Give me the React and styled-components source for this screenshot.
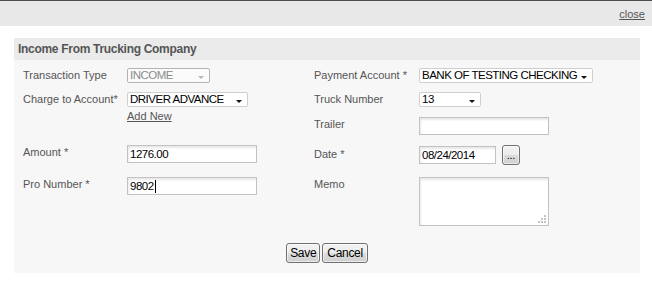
import React from "react"
import styled, { createGlobalStyle, css } from "styled-components"

const GlobalStyle = createGlobalStyle`
  html, body {
    margin: 0;
    padding: 0;
    background: #ffffff;
  }
  body {
    font-family: "Liberation Sans", Arial, sans-serif;
    font-size: 11px;
    color: #555555;
  }
`

const Window = styled.div`
  width: 652px;
  height: 282px;
  border-top: 1px solid #4d4d4d;
  box-sizing: border-box;
`

const TopBar = styled.div`
  height: 25px;
  background: #e8e8e8;
  display: flex;
  justify-content: flex-end;
  align-items: flex-start;
  padding: 7px 7px 0 0;
  box-sizing: border-box;
`

const CloseLink = styled.a`
  color: #555555;
  font-size: 11px;
  line-height: 13px;
  text-decoration: underline;
`

const Panel = styled.div`
  margin: 12px 12px 0 14px;
  width: 626px;
`

const PanelTitle = styled.div`
  height: 22px;
  line-height: 22px;
  background: #ebebeb;
  padding-left: 4px;
  font-weight: bold;
  font-size: 12px;
  letter-spacing: -0.3px;
  color: #555555;
`

const PanelBody = styled.div`
  background: #f7f7f7;
  height: 213px;
  padding: 8px 0 0 9px;
  box-sizing: border-box;
`

const FormGrid = styled.div`
  display: grid;
  grid-template-columns: 104px 187px 105px 1fr;
  grid-template-rows: 24px 25px 28px 32px 49px;
  align-items: start;
`

const Label = styled.div`
  padding-top: ${(p) => p.$top ?? 1}px;
  font-size: 11px;
  line-height: 13px;
  color: #555555;
  white-space: nowrap;
`

const Cell = styled.div`
  display: flex;
  flex-direction: ${(p) => (p.$stack ? "column" : "row")};
  align-items: ${(p) => (p.$stack ? "flex-start" : "center")};
  gap: ${(p) => p.$gap ?? 0}px;
`

const valueText = css`
  font-family: "Liberation Sans", Arial, sans-serif;
  font-size: 11.5px;
  letter-spacing: -0.5px;
  color: #000000;
  white-space: nowrap;
`

const Select = styled.div`
  ${valueText};
  position: relative;
  width: ${(p) => p.$w}px;
  height: 15px;
  line-height: 13px;
  box-sizing: border-box;
  border: 1px solid ${(p) => (p.$disabled ? "#b4b4b4" : "#cfcfcf")};
  border-radius: 2px;
  background: ${(p) => (p.$disabled ? "#fbfbfb" : "#ffffff")};
  color: ${(p) => (p.$disabled ? "#8a8a8a" : "#000000")};
  padding-left: 2px;

  &::after {
    content: "";
    position: absolute;
    right: 5px;
    bottom: 3px;
    width: 0;
    height: 0;
    border-left: 3.5px solid transparent;
    border-right: 3.5px solid transparent;
    border-top: 3px solid ${(p) => (p.$disabled ? "#b8b8b8" : "#111111")};
  }
`

const Input = styled.div`
  ${valueText};
  position: relative;
  display: flex;
  align-items: center;
  width: ${(p) => p.$w}px;
  height: ${(p) => p.$h ?? 18}px;
  box-sizing: border-box;
  border: 1px solid #c2c2c2;
  background: #ffffff;
  box-shadow: inset 1px 2px 2px rgba(0, 0, 0, 0.09);
  padding-left: 2px;
`

const Memo = styled(Input)`
  align-items: flex-start;
`

const Caret = styled.span`
  display: inline-block;
  width: 1px;
  height: 13px;
  margin-left: 1px;
  background: #000000;
`

const Grip = styled.svg`
  position: absolute;
  right: 2px;
  bottom: 2px;
`

const AddNew = styled.a`
  margin-top: 3px;
  font-size: 11px;
  line-height: 13px;
  color: #555555;
  text-decoration: underline;
`

const Button = styled.button`
  font-family: "Liberation Sans", Arial, sans-serif;
  font-size: 12px;
  letter-spacing: -0.3px;
  color: #000000;
  height: 20px;
  padding: 0 ${(p) => p.$pad ?? 3}px;
  border: 1px solid #707070;
  border-radius: 3px;
  background: linear-gradient(#f3f3f3, #ebebeb 50%, #dddddd 51%, #cfcfcf);
  box-shadow: inset 0 0 0 1px rgba(255, 255, 255, 0.6);
  line-height: 16px;
`

const DotsButton = styled(Button)`
  width: 18px;
  padding: 0;
  font-size: 11px;
  line-height: 12px;
`

const Actions = styled.div`
  display: flex;
  justify-content: center;
  gap: 2px;
  margin: 17px 0 0 -9px;
`

const ResizeGrip = () => (
  <Grip width="9" height="9" viewBox="0 0 9 9">
    {[
      [7, 1],
      [4, 4],
      [7, 4],
      [1, 7],
      [4, 7],
      [7, 7],
    ].map(([x, y]) => (
      <rect key={`${x}-${y}`} x={x} y={y} width="2" height="2" fill="#c4c4c4" />
    ))}
  </Grip>
)

export default function App() {
  return (
    <>
      <GlobalStyle />
      <Window>
        <TopBar>
          <CloseLink href="#">close</CloseLink>
        </TopBar>
        <Panel>
          <PanelTitle>Income From Trucking Company</PanelTitle>
          <PanelBody>
            <FormGrid>
              <Label>Transaction Type</Label>
              <Cell>
                <Select $w={83} $disabled>
                  INCOME
                </Select>
              </Cell>
              <Label>Payment Account *</Label>
              <Cell>
                <Select $w={174}>BANK OF TESTING CHECKING</Select>
              </Cell>

              <Label>Charge to Account*</Label>
              <Cell $stack>
                <Select $w={121}>DRIVER ADVANCE</Select>
                <AddNew href="#">Add New</AddNew>
              </Cell>
              <Label>Truck Number</Label>
              <Cell>
                <Select $w={62}>13</Select>
              </Cell>

              <div />
              <div />
              <Label>Trailer</Label>
              <Cell>
                <Input $w={130} />
              </Cell>

              <Label>Amount *</Label>
              <Cell>
                <Input $w={130}>1276.00</Input>
              </Cell>
              <Label $top={3}>Date *</Label>
              <Cell $gap={6}>
                <Input $w={77}>08/24/2014</Input>
                <DotsButton>...</DotsButton>
              </Cell>

              <Label>Pro Number *</Label>
              <Cell>
                <Input $w={130}>
                  9802
                  <Caret />
                </Input>
              </Cell>
              <Label>Memo</Label>
              <Cell>
                <Memo $w={130} $h={49}>
                  <ResizeGrip />
                </Memo>
              </Cell>
            </FormGrid>
            <Actions>
              <Button>Save</Button>
              <Button $pad={4}>Cancel</Button>
            </Actions>
          </PanelBody>
        </Panel>
      </Window>
    </>
  )
}
